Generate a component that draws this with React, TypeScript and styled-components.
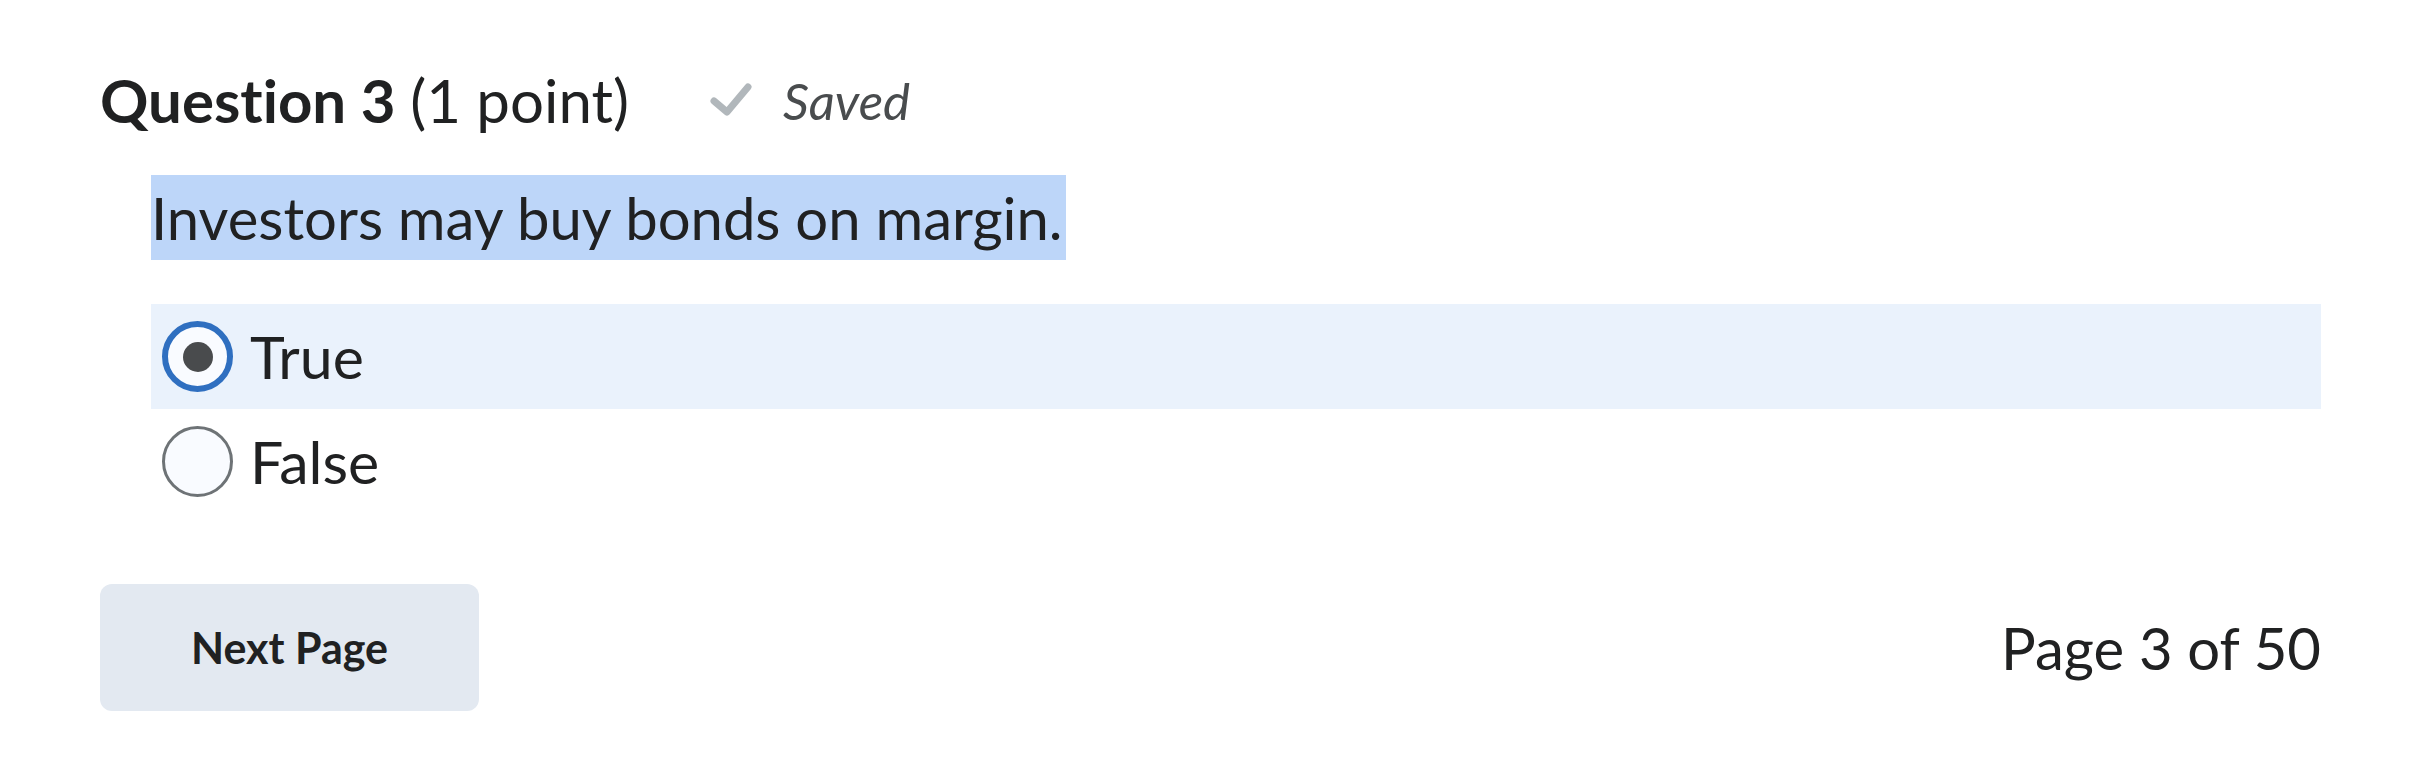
import styled, { createGlobalStyle } from "styled-components";

const GlobalStyle = createGlobalStyle`
  body {
    margin: 0;
    background: #ffffff;
    font-family: Lato, "Open Sans", sans-serif;
    font-variant-ligatures: none;
    color: #202122;
  }
`;

const Page = styled.div`
  padding: 64px 101px 0 100px;
`;

const HeaderRow = styled.div`
  display: flex;
  align-items: center;
  height: 72px;
`;

const Heading = styled.h2`
  margin: 0;
  font-size: 60px;
  line-height: 72px;
  font-weight: 700;
`;

const Points = styled.span`
  font-weight: 400;
`;

const SavedStatus = styled.div`
  display: flex;
  align-items: center;
  gap: 30px;
  margin-left: 80px;
  font-size: 51px;
  font-style: italic;
  color: #494c4e;
`;

const Body = styled.div`
  padding-left: 51px;
`;

const QuestionText = styled.div`
  margin-top: 39px;
  display: inline-block;
  background: #bdd6f9;
  font-size: 58px;
  line-height: 85px;
  padding-right: 3px;
`;

const Options = styled.div`
  margin-top: 44px;
  display: flex;
  flex-direction: column;
`;

const OptionRow = styled.label<{ $selected?: boolean }>`
  display: flex;
  align-items: center;
  gap: 17px;
  height: 105px;
  padding-left: 11px;
  background: ${(p) => (p.$selected ? "#eaf2fc" : "transparent")};
  font-size: 59px;
`;

const Radio = styled.span<{ $checked?: boolean }>`
  box-sizing: border-box;
  width: 71px;
  height: 71px;
  border-radius: 50%;
  background: #f9fbff;
  border: ${(p) => (p.$checked ? "6px solid #2f6fc0" : "3px solid #6e7376")};
  display: flex;
  align-items: center;
  justify-content: center;
  &::after {
    content: "";
    display: ${(p) => (p.$checked ? "block" : "none")};
    width: 30px;
    height: 30px;
    border-radius: 50%;
    background: #494b4d;
  }
`;

const Footer = styled.div`
  margin-top: 70px;
  display: flex;
  align-items: center;
  justify-content: space-between;
`;

const NextButton = styled.button`
  width: 379px;
  height: 127px;
  border: none;
  border-radius: 12px;
  background: #e3e9f1;
  color: #202122;
  font-family: Lato, sans-serif;
  font-size: 43px;
  font-weight: 700;
  cursor: pointer;
`;

const PageCount = styled.div`
  font-size: 58px;
`;

const CheckIcon = () => (
  <svg width="44" height="36" viewBox="0 0 44 36">
    <polyline
      points="5,19 18,30 39,5"
      fill="none"
      stroke="#b1b7bb"
      strokeWidth="7"
      strokeLinecap="round"
      strokeLinejoin="round"
    />
  </svg>
);

export default function App() {
  return (
    <>
      <GlobalStyle />
      <Page>
        <HeaderRow>
          <Heading>
            Question 3 <Points>(1 point)</Points>
          </Heading>
          <SavedStatus>
            <CheckIcon />
            <span>Saved</span>
          </SavedStatus>
        </HeaderRow>
        <Body>
          <QuestionText>Investors may buy bonds on margin.</QuestionText>
          <Options>
            <OptionRow $selected>
              <Radio $checked />
              True
            </OptionRow>
            <OptionRow>
              <Radio />
              False
            </OptionRow>
          </Options>
        </Body>
        <Footer>
          <NextButton>Next Page</NextButton>
          <PageCount>Page 3 of 50</PageCount>
        </Footer>
      </Page>
    </>
  );
}
